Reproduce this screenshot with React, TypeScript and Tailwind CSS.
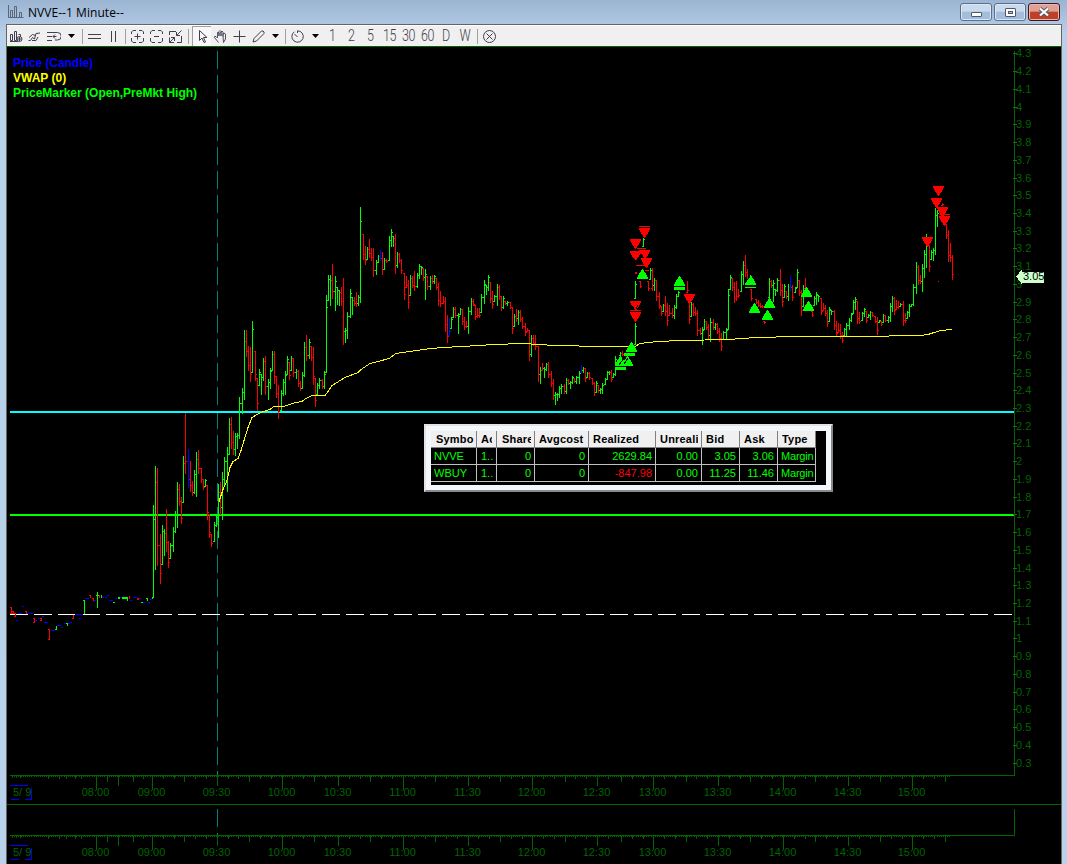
import React from 'react';

type Bar = { x: number; top: number; bottom: number; color: string; open: number; close: number };

const COLORS: Record<string, string> = { g: '#00ff00', r: '#ff0000', b: '#0000ff' };

// x top bottom, grouped by session part; the prefix letter is the bar colour
const BAR_DATA = `
g153 505 598,g155 466 570,r157 468 566,r160 534 584,g162 525 565,g164 529 556,r166 509 552,r168 541 568,g170 543 559,g173 527 552,g175 511 533,g177 482 528,r179 484 506,r181 497 524,g183 456 503,r185 413 474,b188 449 488,r190 461 492,r192 481 496,g194 470 494,g196 452 497,r198 450 474,r201 468 483,r203 479 490,g205 479 487,r207 485 520,r209 514 538,r211 534 547,g214 522 542,g216 515 527,g218 484 538,r220 482 515,g222 472 520,g224 457 486,g227 447 492,g229 418 455,r231 417 449,r233 431 455,g235 433 456,g237 433 449,g239 397 439,
g242 388 414,g244 330 400,r246 330 357,r248 346 371,r250 347 382,g252 321 373,r255 351 381,r257 378 411,g259 369 386,g261 374 395,g263 358 381,r265 356 395,g268 379 400,g270 368 389,g272 351 371,r274 351 384,r276 376 398,r278 385 419,g281 390 411,g283 379 396,g285 371 395,g287 356 375,r289 362 380,g291 356 371,r293 358 377,g296 369 379,r298 370 387,r300 381 391,g302 372 389,g304 342 377,r306 335 361,g309 339 359,r311 346 361,r313 347 385,r315 378 407,g317 383 395,g319 378 389,r322 379 389,g324 371 389,g326 295 373,g328 275 301,g330 275 306,r332 264 299,g335 276 311,g337 287 305,g339 290 306,r341 287 306,r343 278 345,g345 328 343,g347 312 339,g350 289 318,g352 297 315,r354 297 306,r356 292 307,g358 295 306,g360 207 303,
r363 234 260,r365 246 265,g367 247 260,r369 239 258,r371 248 261,r373 248 277,g376 260 275,g378 255 263,b380 250 261,r382 252 275,g384 258 270,r386 259 263,g389 236 261,g391 229 247,g393 236 247,r395 234 274,g397 252 268,r399 253 263,r401 259 274,r404 273 300,r406 276 288,r408 280 309,g410 275 296,r412 276 288,r414 271 291,g417 273 288,g419 264 279,g421 266 275,r423 268 281,g425 269 300,r427 276 290,g430 276 290,r432 275 284,g434 275 284,r436 278 290,r438 283 306,r440 291 307,r443 296 304,r445 297 332,r447 315 343,b449 318 336,g451 317 329,g453 307 318,r455 307 318,g458 313 334,g460 308 315,r462 309 325,r464 317 330,r466 321 328,g468 307 334,
g471 298 315,r473 299 306,r475 305 320,r477 308 318,r479 308 318,g481 294 313,g484 280 304,g486 285 295,g488 275 291,r490 282 303,r492 291 309,g494 295 302,g497 284 306,r499 285 300,r501 296 311,g503 296 309,r505 301 305,g507 301 306,r510 302 309,r512 307 334,g514 314 327,r516 309 322,g518 310 325,r520 310 322,r522 317 329,r525 323 336,r527 328 332,r529 330 361,g531 335 357,r533 335 346,r535 335 350,r538 346 382,g540 367 384,r542 363 371,g544 367 378,g546 363 371,r548 362 378,r551 371 387,r553 379 400,g555 392 405,g557 393 401,g559 386 398,g561 384 394,r564 384 394,g566 378 394,r568 379 385,g570 381 389,g572 376 384,r574 378 383,g576 376 384,g579 371 384,b581 365 373,g583 367 373,r585 368 382,g587 372 378,r589 372 380,r592 378 385,r594 382 396,g596 381 393,r598 385 393,g600 388 394,g602 383 394,g605 378 385,g607 371 380,g609 371 375,r611 370 382,g613 373 378,g615 356 376,g620 352 356,r622 351 356,
g635 323 345,g635 281 299,g643 238 247,r640 281 288,g650 268 280,r648 281 291,r652 268 291,g654 278 291,r656 280 301,r659 292 309,r661 306 316,g663 304 312,r665 296 316,r667 303 326,r669 305 316,r672 308 318,g674 305 319,g676 294 309,g678 291 297,r687 281 293,r689 302 324,g691 302 317,r693 303 316,r695 307 316,r697 310 336,r700 328 335,g702 327 345,g704 319 330,r706 321 330,r708 324 339,g710 318 342,r713 319 330,g715 323 330,r717 323 334,r719 328 342,r721 333 351,g723 331 340,g726 328 339,g728 289 330,g730 275 290,r732 278 291,r734 282 303,r736 281 301,r738 289 298,g741 271 292,g743 261 285,r745 255 277,r747 269 280,r751 289 301,r756 299 304,r758 300 307,r760 303 308,r762 305 308,r764 321 324,g769 278 298,r771 280 288,g773 280 302,g775 289 296,g777 278 292,r780 269 296,r782 284 307,g784 284 298,r786 291 299,g788 284 301,b790 276 291,r792 285 301,g795 287 293,g797 269 288,r799 280 296,r801 290 316,g803 285 307,r805 278 290,r812 311 317,g814 296 306,g816 292 305,g818 295 302,
r821 298 315,r823 303 311,r825 305 316,r827 310 327,g829 307 322,g831 310 315,r834 310 330,r836 321 337,r838 323 333,r840 324 339,r842 332 343,g844 328 336,g846 323 337,g849 318 330,g851 313 322,g853 300 314,g855 297 310,r857 301 324,r859 312 324,g862 312 321,g864 308 317,r866 311 323,g868 314 318,g870 311 320,r872 312 317,r875 316 323,r877 317 335,g879 320 323,r881 321 326,g883 314 323,r885 315 322,g888 316 323,g890 303 322,g892 296 312,r894 297 315,r896 300 310,r898 301 309,g900 303 307,r903 301 326,r905 313 323,g907 311 319,g909 304 317,g911 304 307,g913 284 306,g916 262 294,r918 265 285,r920 275 284,g922 264 292,g924 250 278,g926 234 268,r929 245 272,g931 250 260,g933 248 261,g935 208 255,g937 210 227,r942 203 206,r946 224 239,r948 230 262,r950 243 262,r952 255 280`;

const bars: Bar[] = [];
BAR_DATA.trim().split(',').forEach((item) => {
  const s = item.trim();
  const [x, top, bottom] = s.slice(1).split(' ').map(Number);
  const h = bottom - top;
  const prev = bars[bars.length - 1];
  const up = s[0] === 'g';
  const fallback = up ? bottom - 1 : top;
  const open = prev ? Math.min(Math.max(prev.close, top), bottom - 1) : fallback;
  const close = up ? top + Math.round(h * 0.15) : bottom - 1 - Math.round(h * 0.2);
  bars.push({ x, top, bottom, color: COLORS[s[0]], open, close });
});

// premarket prints: colour, x, y, width, height
const PRINTS: [string, number, number, number, number][] = [
  ['r', 10, 607, 2, 1], ['r', 11, 607, 1, 7], ['r', 12, 611, 2, 1], ['r', 13, 611, 1, 3], ['r', 10, 613, 6, 1], ['r', 15, 613, 1, 4],
  ['r', 14, 616, 1, 1], ['b', 16, 620, 2, 1], ['b', 18, 613, 4, 1], ['b', 22, 606, 2, 1], ['r', 25, 611, 2, 1], ['r', 26, 611, 1, 3],
  ['b', 27, 613, 6, 1], ['r', 33, 618, 2, 1], ['r', 34, 618, 1, 5], ['r', 33, 622, 2, 1], ['b', 35, 620, 2, 1], ['b', 38, 618, 2, 1],
  ['r', 40, 618, 2, 1], ['r', 41, 618, 1, 3], ['r', 40, 620, 2, 1], ['b', 42, 616, 2, 1], ['b', 44, 622, 4, 1], ['r', 48, 629, 2, 1],
  ['r', 49, 629, 1, 11], ['r', 48, 639, 2, 1], ['b', 51, 630, 4, 1], ['g', 56, 626, 1, 4], ['g', 55, 629, 1, 1], ['b', 57, 625, 4, 1],
  ['b', 61, 627, 2, 1], ['b', 64, 623, 2, 1], ['g', 66, 623, 2, 1], ['g', 67, 623, 1, 3], ['b', 68, 623, 2, 1], ['b', 70, 622, 2, 1],
  ['r', 73, 615, 1, 4], ['r', 72, 618, 2, 1], ['b', 75, 614, 8, 1], ['b', 79, 618, 2, 1], ['g', 84, 600, 1, 14], ['g', 83, 600, 1, 1],
  ['b', 85, 598, 4, 1], ['r', 89, 595, 2, 1], ['r', 90, 595, 1, 3], ['r', 92, 598, 2, 1], ['r', 93, 598, 1, 3], ['b', 94, 600, 2, 1],
  ['g', 97, 592, 1, 16], ['g', 96, 595, 3, 1], ['r', 99, 595, 1, 3], ['g', 101, 595, 1, 3], ['b', 102, 597, 2, 1], ['b', 105, 597, 2, 1],
  ['b', 107, 595, 2, 1], ['b', 109, 600, 4, 1], ['g', 113, 602, 2, 1], ['b', 115, 598, 2, 1], ['g', 118, 597, 2, 2], ['b', 120, 597, 2, 1],
  ['g', 122, 597, 6, 2], ['g', 127, 598, 1, 3], ['r', 129, 596, 1, 3], ['b', 130, 600, 2, 1], ['b', 133, 597, 4, 1], ['r', 137, 598, 2, 2],
  ['b', 139, 598, 2, 1], ['g', 141, 602, 2, 1], ['b', 143, 602, 2, 1], ['g', 146, 598, 2, 1], ['g', 147, 598, 1, 3], ['b', 148, 602, 2, 1],
  ['b', 150, 599, 2, 1], ['g', 152, 598, 1, 1],
];

const VWAP =
  '219,501 223,489 227,480 230,467 233,461 238,458 241,450 244,440 248,427 252,417 257,414 263,411 270,409 274,406 284,406 292,403 302,401 306,398 312,395 325,395 328,391 332,385 345,377 358,372 361,369 370,363 378,361 389,358 396,353 410,351 431,348 444,347 461,346 480,345 492,344 525,343 537,344 557,345 600,346 627,346 635,346 640,343 658,341 681,340 729,339 742,338 757,337 796,336 888,336 890,335 920,335 928,334 934,332 941,330 952,329';

const SELLS: [number, number][] = [
  [644, 228], [635, 239], [635, 251], [644, 250], [646, 258], [635, 301], [635, 312], [689, 294],
  [938, 186], [936, 198], [942, 207], [944, 216], [927, 237],
];
const BUYS: [number, number][] = [
  [642, 279], [631, 352], [620, 366], [627, 366], [679, 286], [750, 285], [754, 313], [767, 320], [769, 308], [806, 297], [808, 311],
];
// half width of each pixel row of a marker, from its base to its tip
const MARKER_ROWS = [5, 5, 4, 4, 3, 3, 2, 1, 1, 0];

// slivers left where markers overlap
const SLIVERS: [string, number, number, number, number][] = [
  ['r', 639, 226, 11, 1], ['r', 637, 248, 9, 1], ['r', 630, 310, 11, 1], ['r', 939, 214, 11, 1], ['r', 636, 265, 9, 1], ['r', 635, 272, 2, 2], ['r', 645, 270, 4, 1],
  ['g', 624, 353, 11, 3], ['g', 615, 367, 11, 3], ['g', 674, 287, 11, 3], ['g', 745, 287, 11, 1], ['r', 938, 281, 1, 1],
];

const priceLabels = Array.from({ length: 41 }, (_, i) => ({
  text: String(Number((4.3 - i * 0.1).toFixed(1))),
  y: 53.4 + i * 17.73,
}));

const TIMES: [string, number][] = [
  ['08:00', 96], ['09:00', 152], ['09:30', 217], ['10:00', 282], ['10:30', 338], ['11:00', 403], ['11:30', 468], ['12:00', 532],
  ['12:30', 597], ['13:00', 653], ['13:30', 718], ['14:00', 783], ['14:30', 848], ['15:00', 912],
];
const MAJOR: [number, number][] = [
  [96, 14], [107, 6], [118, 10], [133, 6], [152, 14], [184, 6], [217, 10], [249, 6], [282, 14], [314, 6], [338, 10], [370, 6], [403, 14],
  [435, 6], [468, 10], [500, 6], [532, 14], [565, 6], [597, 10], [621, 6], [653, 14], [686, 6], [718, 10], [750, 6], [783, 14], [815, 6],
  [848, 10], [880, 6], [912, 14], [945, 6],
];
const MINOR = [48, 59, 66, 75, 81, 143, 163, 174, 195, 206, 228, 238, 260, 271, 292, 303, 325, 349, 360, 381, 392, 414, 425, 446, 457, 478, 489,
  511, 522, 543, 554, 575, 586, 608, 632, 643, 664, 675, 696, 707, 729, 740, 761, 772, 794, 805, 826, 837, 859, 870, 891, 902, 923, 934];

const TimeAxis = ({ y }: { y: number }) => (
  <g>
    <rect x="10" y={y} width="1005" height="1" fill="#006400" />
    <line x1="12" x2="952" y1={y + 1.5} y2={y + 1.5} stroke="#006400" strokeDasharray="1 1.15" />
    {[12, 16, 20].map((x) => <rect key={x} x={x} y={y} width="1" height="3" fill="#006400" />)}
    {MINOR.map((x) => <rect key={x} x={x} y={y} width="1" height="4" fill="#006400" />)}
    {MAJOR.map(([x, h]) => <rect key={x} x={x} y={y} width="1" height={h + 1} fill="#006400" />)}
    {TIMES.map(([t, x]) => (
      <text key={t} x={x - 0.5} y={y + 21} textAnchor="middle" fill="#006400">{t}</text>
    ))}
    <text x="13" y={y + 21} fill="#006400">5/ 9</text>
    <path d={`M10 ${y + 10.5}H28M11 ${y + 24.5}H19M25 ${y + 24.5}H31M31.5 ${y + 13}V${y + 25}`} stroke="#0000ff" fill="none" />
  </g>
);

const Chart = () => (
  <svg viewBox="7 47 1054 817" width="1054" height="817" className="block bg-black font-['Liberation_Sans',sans-serif] text-[11px]" shapeRendering="crispEdges">
    <line x1="217.5" x2="217.5" y1="51" y2="775" stroke="#008080" strokeDasharray="18 6" />
    <line x1="217.5" x2="217.5" y1="809" y2="835" stroke="#008080" strokeDasharray="18 6" />
    <rect x="10" y="411" width="1005" height="2" fill="#00ffff" />
    <rect x="10" y="514" width="1005" height="2" fill="#00ff00" />
    <line x1="10" x2="1013" y1="614.5" y2="614.5" stroke="#ffffff" strokeDasharray="18 6" />
    {PRINTS.map(([c, x, y, w, h], i) => <rect key={i} x={x} y={y} width={w} height={h} fill={COLORS[c]} />)}
    {bars.map((b, i) => (
      <g key={i} fill={b.color}>
        <rect x={b.x} y={b.top} width="1" height={b.bottom - b.top} />
        <rect x={b.x - 1} y={b.open} width="1" height="1" />
        <rect x={b.x + 1} y={b.close} width="1" height="1" />
      </g>
    ))}
    <polyline points={VWAP} fill="none" stroke="#ffff00" strokeWidth="1" transform="translate(0 .5)" />
    {SELLS.map(([x, y], i) => (
      <g key={i} fill="#ff0000">
        {MARKER_ROWS.map((w, r) => <rect key={r} x={x - w} y={y + r} width={w * 2 + 1} height="1" />)}
      </g>
    ))}
    {BUYS.map(([x, y], i) => (
      <g key={i} fill="#00ff00">
        {MARKER_ROWS.map((w, r) => <rect key={r} x={x - w} y={y - 1 - r} width={w * 2 + 1} height="1" />)}
      </g>
    ))}
    {SLIVERS.map(([c, x, y, w, h], i) => <rect key={i} x={x} y={y} width={w} height={h} fill={COLORS[c]} />)}
    <path d="M674 286.500h11M624 352.500h11M615 366.500h11M632 257l6 7M639 257l-3 5M641 254l3 4M631 305l4 5M638 305l-2 4M619 365l6 -8M624 364l4 -6M745 283l5 -7" stroke="#000" fill="none" />

    <rect x="1014" y="51" width="1" height="725" fill="#006400" />
    {priceLabels.map((p) => (
      <g key={p.text}>
        <rect x="1013" y={Math.round(p.y)} width="4" height="1" fill="#2f5f2f" />
        <text x="1016" y={Math.round(p.y) + 4} fill="#006400">{p.text}</text>
      </g>
    ))}
    <path d="M1016 276.500l6 -7v2h22v11h-22v2z" fill="#ccffcc" />
    <text x="1023" y="280" fill="#000">3.05</text>

    <TimeAxis y={775} />
    <rect x="7" y="804" width="1054" height="1" fill="#006400" />
    <rect x="1014" y="809" width="1" height="27" fill="#006400" />
    <TimeAxis y={835} />
  </svg>
);

const Icon = ({ children, className = 'w-[19px]' }: { children: React.ReactNode; className?: string }) => (
  <span className={`flex h-full shrink-0 items-center justify-center ${className}`}>
    <svg width="15" height="15" viewBox="0 0 15 15" fill="none" stroke="#3f3f4f" strokeWidth="1">{children}</svg>
  </span>
);
const Caret = ({ className }: { className: string }) => (
  <span className={`flex h-full shrink-0 items-center justify-center ${className}`}>
    <svg width="7" height="4" viewBox="0 0 7 4"><path d="M0 0h7L3.5 4z" fill="#000" /></svg>
  </span>
);
const Sep = ({ className }: { className: string }) => (
  <span className={`flex h-full shrink-0 items-center justify-center ${className}`}>
    <span className="h-[15px] w-px bg-[#a0a0a0]" />
  </span>
);

const Toolbar = () => (
  <div className="flex h-[20px] items-center bg-[#f0f0f0]">
    <Icon className="w-[18px]"><path d="M1.500 5.500h2v6h-2zM5.500 2.500h2v9h-2zM1 12.500h8M9.500 5.500h2v2" /><circle cx="10.500" cy="10" r="2.500" /><path d="M10.500 8v4M8.500 10h4" /></Icon>
    <Icon><path d="M1.500 11.500h2l2-3 2 1.500 1.500-5.500 4-.500M2 8.500l3.500-3 3 1M5 11.500h4l2-3.500" /></Icon>
    <Icon><path d="M1 3.500h10.500a2.500 2.500 0 0 1 0 7.500H9M1 7.500h5M1 11.500h5M7 7.500h3.500M9 5.500l-2 2 2 2" /></Icon>
    <Caret className="w-[16px]" />
    <Sep className="w-[6px]" />
    <Icon><path d="M1 5.500h13M1 9.500h13" /></Icon>
    <Icon><path d="M5.500 2v11M9.500 2v11" /></Icon>
    <Sep className="w-[5px]" />
    <Icon><path d="M1.500 5V3l1.500-1.500H6M9 1.500h3L13.500 3V5M13.500 9v3L12 13.500H9M6 13.500H3L1.500 12V9M7.500 4.500v6M4.500 7.500h6" /></Icon>
    <Icon><path d="M1.500 5V3l1.500-1.500H6M9 1.500h3L13.500 3V5M13.500 9v3L12 13.500H9M6 13.500H3L1.500 12V9M5 7.500h5" /></Icon>
    <Icon><path d="M1.500 6V2.500H8M13.500 7v6.500H9M13.500 1.500L8.500 6.500M8.500 3V6.500H12M1.500 13.500l5-5M3 8.500H6.500V12M1.500 8.500v5H6" /></Icon>
    <Sep className="w-[7px]" />
    <span className="h-full border-t border-l border-[#a0a0a0] bg-[#f8f8f8]">
      <Icon className="w-[18px]"><path d="M4.500 1.500v10l2.500-2.500 2 4.500 1.500-.500-2-4.500H12z" /></Icon>
    </span>
    <Icon><path d="M5.500 13.500L1.500 8.500l0-1 1.500 0L4.500 9V4l.5-1 1 1V7M6 7V2.500l1-1 1 1V7M8 7V3l1-1 1 1V7.500M10 7V5l1-1 1.500 1V10l-2 3.500z" strokeWidth=".9" /></Icon>
    <Icon><path d="M7.500 1.500v12M1.500 7.500h12" /></Icon>
    <Icon><path d="M2 13l1-3.500L10.500 2h1.500l1 1v1.500L5.500 12z" /></Icon>
    <Caret className="w-[14px]" />
    <Sep className="w-[6px]" />
    <Icon><path d="M4.500 2.700a5.700 5.700 0 1 0 3-.900V4M4.500 5l3 3" /></Icon>
    <Caret className="w-[16px]" />
    {['1', '2', '5', '15', '30', '60', 'D', 'W'].map((t) => (
      <span key={t} className="flex w-[19px] shrink-0 justify-center">
        <span className="scale-x-[0.78] font-['Roboto',sans-serif] text-[16px] leading-[20px] font-light tracking-[-0.3px] text-[#3f3f4f]">{t}</span>
      </span>
    ))}
    <Sep className="w-[5px]" />
    <Icon><circle cx="7.500" cy="7.500" r="6" /><path d="M4.500 4.500l6 6M10.500 4.500l-6 6" /></Icon>
  </div>
);

const COLUMNS = [
  { title: 'Symbo', head: 'pl-[5px]', cell: 'pl-[3px]' },
  { title: 'Ac', head: 'pl-[4px] pr-[4px]', cell: 'pl-[4px]' },
  { title: 'Share', head: 'pl-[5px] pr-[3px]', cell: 'text-right pr-[3px]' },
  { title: 'Avgcost', head: 'pl-[4px]', cell: 'text-right pr-[3px]' },
  { title: 'Realized', head: 'pl-[4px]', cell: 'text-right pr-[3px]' },
  { title: 'Unreali', head: 'pl-[4px] pr-[3px]', cell: 'text-right pr-[3px]' },
  { title: 'Bid', head: 'pl-[4px]', cell: 'text-right pr-[3px]' },
  { title: 'Ask', head: 'pl-[4px]', cell: 'text-right pr-[3px]' },
  { title: 'Type', head: 'pl-[4px]', cell: 'pl-[3px] tracking-[-0.2px]' },
];
const ROWS = [
  ['NVVE', '1..', '0', '0', '2629.84', '0.00', '3.05', '3.06', 'Margin'],
  ['WBUY', '1..', '0', '0', '-847.98', '0.00', '11.25', '11.46', 'Margin'],
];

const Positions = () => (
  <div className="absolute top-[424px] left-[424px] h-[68px] w-[409px] border-2 border-t-[#e3e3e3] border-r-[#8a8a8a] border-b-[#8a8a8a] border-l-[#e3e3e3] bg-[#f4f7fc] p-[5px]">
    <div className="h-[54px] w-[395px] bg-black font-['Liberation_Sans',sans-serif] text-[11px]">
      <div className="grid w-[385px] grid-cols-[46px_20px_38px_54px_67px_46px_38px_38px_38px]">
        {COLUMNS.map((c) => (
          <div key={c.title} className="h-[17px] border-r border-b border-[#808080] bg-[#f0f0f0]">
            <div className={`overflow-hidden leading-[17px] font-bold tracking-[0.2px] whitespace-nowrap text-black ${c.head}`}>
              <div className="overflow-hidden">{c.title}</div>
            </div>
          </div>
        ))}
        {ROWS.map((row) => row.map((v, i) => (
          <div
            key={row[0] + i}
            className={`h-[17px] overflow-hidden border-r border-b border-[#c0c0c0] leading-[17px] whitespace-nowrap ${v.startsWith('-') ? 'text-[#ff0000]' : 'text-[#00ff00]'} ${COLUMNS[i].cell}`}
          >
            {v}
          </div>
        )))}
      </div>
    </div>
  </div>
);

const TitleBar = () => (
  <div className="flex h-[24px] items-start pl-[8px]">
    <svg width="16" height="14" viewBox="0 0 16 14" className="mt-[5px]" fill="none" stroke="#5a6675">
      <path d="M.5 0v12.500H15.500M2.500 12V5.500h2V12M6.500 12V1.500h2V12M11.500 12V7.500h2V12" />
    </svg>
    <span className="ml-[4px] pt-[3px] font-['Open_Sans',sans-serif] text-[12px] leading-[19px] tracking-[0.05px] text-black">NVVE--1 Minute--</span>
    <div className="mr-[7px] ml-auto flex gap-[2px] pt-[3px]">
      <button className="flex h-[18px] w-[32px] items-center justify-center rounded-[3px] border border-[#596f8f] bg-linear-to-b from-[#c9daec] from-45% to-[#a3bedb] to-50% shadow-[inset_0_0_0_1px_#dbe7f4]">
        <span className="mt-[4px] h-[5px] w-[11px] rounded-[1px] border border-[#535666] bg-white" />
      </button>
      <button className="flex h-[18px] w-[32px] items-center justify-center rounded-[3px] border border-[#596f8f] bg-linear-to-b from-[#c9daec] from-45% to-[#a3bedb] to-50% shadow-[inset_0_0_0_1px_#dbe7f4]">
        <span className="flex h-[9px] w-[11px] items-center justify-center rounded-[1px] border border-[#535666] bg-white">
          <span className="h-[3px] w-[5px] border border-[#535666] bg-[#a3bedb]" />
        </span>
      </button>
      <button className="flex h-[18px] w-[32px] items-center justify-center rounded-[3px] border border-[#43131c] bg-linear-to-b from-[#e0a095] from-45% to-[#bd4028] to-50% shadow-[inset_0_0_0_1px_#e9b9b0]">
        <svg width="12" height="10" viewBox="0 0 12 10" fill="none">
          <path d="M2 1.500l8 7M10 1.500l-8 7" stroke="#535666" strokeWidth="4" />
          <path d="M2 1.500l8 7M10 1.500l-8 7" stroke="#fff" strokeWidth="2.200" />
        </svg>
      </button>
    </div>
  </div>
);

const App: React.FC = () => {
  return (
    <div className="relative h-[864px] w-[1067px] overflow-hidden bg-[#bad1ea] bg-linear-to-b from-[#9ab4d2] via-[#b9d0e9] via-[4%] to-[#bad1ea]">
      <TitleBar />
      <div className="ml-[6px] w-[1056px] border-t border-r border-l border-[#646464]">
        <div className="border-t border-white">
          <Toolbar />
        </div>
        <div className="relative h-[818px] border-t border-[#006400]">
          <Chart />
          <div className="absolute top-[9px] left-[6px] font-['Liberation_Sans',sans-serif] text-[12px] leading-[15px] font-bold">
            <div className="tracking-[-0.05px] text-[#0000ff]">Price (Candle)</div>
            <div className="text-[#ffff00]">VWAP (0)</div>
            <div className="text-[#00ff00]">PriceMarker (Open,PreMkt High)</div>
          </div>
        </div>
      </div>
      <Positions />
    </div>
  );
};

export default App;
